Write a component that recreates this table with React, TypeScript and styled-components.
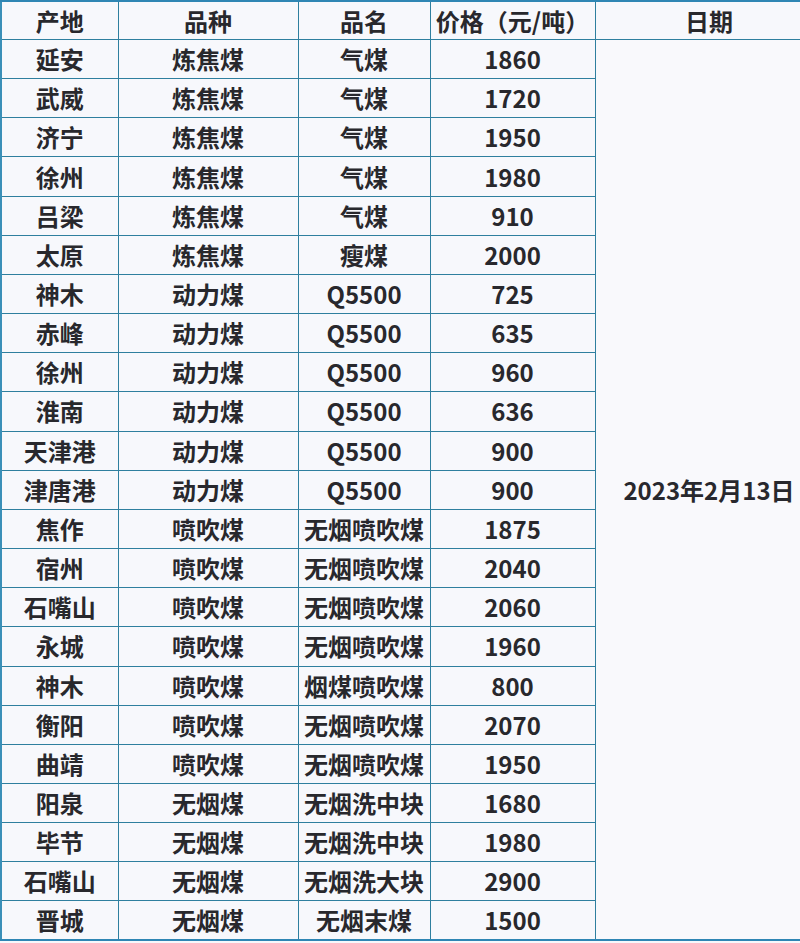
import React from "react";
import styled, { createGlobalStyle } from "styled-components";

const GlobalStyle = createGlobalStyle`
  html, body {
    margin: 0;
    padding: 0;
    background: #f7f8fc;
    overflow: hidden;
  }
  body {
    font-family: "Noto Sans CJK SC", "Noto Sans", sans-serif;
  }
`;

type Row = [string, string, string, string];

const ROWS: Row[] = [
  ["延安", "炼焦煤", "气煤", "1860"],
  ["武威", "炼焦煤", "气煤", "1720"],
  ["济宁", "炼焦煤", "气煤", "1950"],
  ["徐州", "炼焦煤", "气煤", "1980"],
  ["吕梁", "炼焦煤", "气煤", "910"],
  ["太原", "炼焦煤", "瘦煤", "2000"],
  ["神木", "动力煤", "Q5500", "725"],
  ["赤峰", "动力煤", "Q5500", "635"],
  ["徐州", "动力煤", "Q5500", "960"],
  ["淮南", "动力煤", "Q5500", "636"],
  ["天津港", "动力煤", "Q5500", "900"],
  ["津唐港", "动力煤", "Q5500", "900"],
  ["焦作", "喷吹煤", "无烟喷吹煤", "1875"],
  ["宿州", "喷吹煤", "无烟喷吹煤", "2040"],
  ["石嘴山", "喷吹煤", "无烟喷吹煤", "2060"],
  ["永城", "喷吹煤", "无烟喷吹煤", "1960"],
  ["神木", "喷吹煤", "烟煤喷吹煤", "800"],
  ["衡阳", "喷吹煤", "无烟喷吹煤", "2070"],
  ["曲靖", "喷吹煤", "无烟喷吹煤", "1950"],
  ["阳泉", "无烟煤", "无烟洗中块", "1680"],
  ["毕节", "无烟煤", "无烟洗中块", "1980"],
  ["石嘴山", "无烟煤", "无烟洗大块", "2900"],
  ["晋城", "无烟煤", "无烟末煤", "1500"],
];

const DATE = "2023年2月13日";

const Wrap = styled.div`
  width: 800px;
  height: 943px;
  overflow: hidden;
`;

const Table = styled.table`
  width: 822px;
  border-collapse: collapse;
  table-layout: fixed;
  border-top: 2px solid #2f86b4;
  border-bottom: 2px solid #2f86b4;
  border-left: 2px solid #3a8fb8;
`;

const Col = styled.col<{ $w: number }>`
  width: ${({ $w }) => $w}px;
`;

const Tr = styled.tr<{ $head?: boolean }>`
  height: ${({ $head }) => ($head ? 38.5 : 39.17)}px;
`;

const Th = styled.th`
  border: 1.5px solid #2f7f9f;
  padding: 0;
  font-size: 24px;
  font-weight: 700;
  color: #28282d;
  text-align: center;
  line-height: 1;
  white-space: nowrap;
`;

const Td = styled.td`
  border: 1.5px solid #2f7f9f;
  padding: 0;
  font-size: 24px;
  font-weight: 700;
  color: #28282d;
  text-align: center;
  line-height: 1;
  white-space: nowrap;
`;

const DateCell = styled(Td)`
  background: #f9f9fc;
`;

export default function App() {
  return (
    <>
      <GlobalStyle />
      <Wrap>
        <Table>
          <colgroup>
            <Col $w={117} />
            <Col $w={180} />
            <Col $w={132} />
            <Col $w={165} />
            <Col $w={228} />
          </colgroup>
          <thead>
            <Tr $head>
              <Th>产地</Th>
              <Th>品种</Th>
              <Th>品名</Th>
              <Th>价格（元/吨）</Th>
              <Th>日期</Th>
            </Tr>
          </thead>
          <tbody>
            {ROWS.map((r, i) => (
              <Tr key={i}>
                <Td>{r[0]}</Td>
                <Td>{r[1]}</Td>
                <Td>{r[2]}</Td>
                <Td>{r[3]}</Td>
                {i === 0 && <DateCell rowSpan={ROWS.length}>{DATE}</DateCell>}
              </Tr>
            ))}
          </tbody>
        </Table>
      </Wrap>
    </>
  );
}
